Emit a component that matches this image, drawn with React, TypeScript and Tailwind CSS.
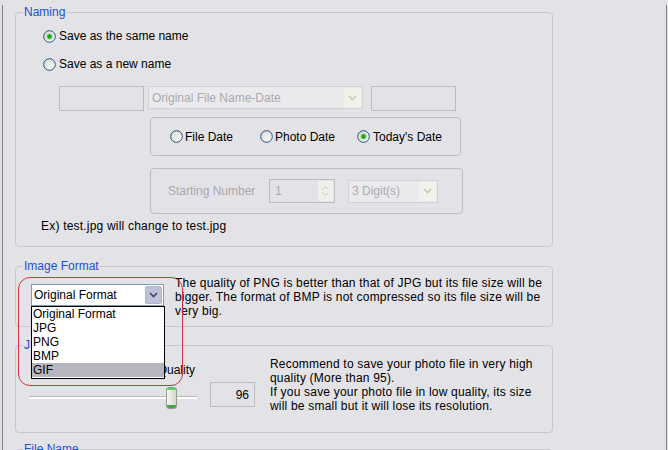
import React from "react";

const FONT = { fontFamily: '"Liberation Sans", Arial, sans-serif' };

function Radio({ checked }: { checked?: boolean }) {
    return (
        <svg width="13" height="13" viewBox="0 0 13 13" className="shrink-0">
            <defs>
                <linearGradient id="radioFill" x1="0" y1="0" x2="1" y2="1">
                    <stop offset="0" stopColor="#d6d6ce" />
                    <stop offset="1" stopColor="#ffffff" />
                </linearGradient>
            </defs>
            <circle cx="6.5" cy="6.5" r="5.8" fill="url(#radioFill)" stroke="#1d5281" strokeWidth="1" />
            {checked && (
                <>
                    <circle cx="6.5" cy="6.5" r="3.2" fill="#a6dc9c" />
                    <circle cx="6.5" cy="6.5" r="2.2" fill="#21a121" />
                </>
            )}
        </svg>
    );
}

function Chevron({ color }: { color: string }) {
    return (
        <svg width="9" height="6" viewBox="0 0 9 6">
            <path d="M1 1 L4.5 4.5 L8 1" fill="none" stroke={color} strokeWidth="1.6" />
        </svg>
    );
}

// greyed out combo box
function DisabledSelect({ text, className }: { text: string; className: string }) {
    return (
        <div
            className={
                "h-[23px] flex items-center border border-[#d2d2d6] bg-[#eaeaec] pl-[3px] pr-[1px] " +
                className
            }
        >
            <span className="flex-1 text-[#ababaf] whitespace-nowrap overflow-hidden">{text}</span>
            <div className="w-[17px] h-[19px] flex items-center justify-center bg-[#f2f2ea]">
                <Chevron color="#c8c8c4" />
            </div>
        </div>
    );
}

function Group({
    title,
    className,
    children,
}: {
    title: string;
    className: string;
    children?: React.ReactNode;
}) {
    return (
        <fieldset className={"w-[538px] rounded-[4px] border border-[#c7c7cd] " + className}>
            <legend className="ml-[7px] px-[1px] leading-[14px] text-[#1d4fd2]">{title}</legend>
            {children}
        </fieldset>
    );
}

export default function App() {
    return (
        <div
            className="relative w-[668px] h-[450px] overflow-hidden bg-[#e3e3e7] text-[12px] leading-[14px] text-black"
            style={FONT}
        >
            <div className="ml-[2px] w-[665px] h-full border-l border-r border-[#80808e] pl-[12px]">
                {/* Naming */}
                <Group title="Naming" className="mt-[5px] pb-[12px]">
                    <div className="mt-[9px] ml-[27px] h-[16px] flex items-center gap-[3px]">
                        <Radio checked />
                        <span>Save as the same name</span>
                    </div>
                    <div className="mt-[12px] ml-[27px] h-[16px] flex items-center gap-[3px]">
                        <Radio />
                        <span>Save as a new name</span>
                    </div>

                    <div className="mt-[14px] ml-[43px] flex items-start">
                        <div className="w-[85px] h-[25px] border border-[#bcbcc2]" />
                        <DisabledSelect className="ml-[4px] w-[215px]" text="Original File Name-Date" />
                        <div className="ml-[8px] w-[85px] h-[25px] border border-[#bcbcc2]" />
                    </div>

                    <div className="mt-[6px] ml-[134px] w-[311px] h-[39px] rounded-[4px] border border-[#bcbcc2] flex items-center pl-[19px]">
                        <div className="w-[90px] flex items-center gap-[2px]">
                            <Radio />
                            <span>File Date</span>
                        </div>
                        <div className="w-[97px] flex items-center gap-[2px]">
                            <Radio />
                            <span>Photo Date</span>
                        </div>
                        <div className="flex items-center gap-[3px]">
                            <Radio checked />
                            <span>Today's Date</span>
                        </div>
                    </div>

                    <div className="mt-[12px] ml-[134px] w-[313px] h-[46px] rounded-[4px] border border-[#bcbcc2] flex items-center pl-[17px]">
                        <span className="w-[101px] text-[#a9a9ad]">Starting Number</span>
                        <div className="w-[66px] h-[24px] flex items-center border border-[#bcbcc2] pl-[5px] pr-[1px]">
                            <span className="flex-1 text-[#a9a9ad]">1</span>
                            <div className="w-[15px] h-[20px] flex flex-col items-center justify-center gap-[2px] bg-[#f0f0e8]">
                                <svg width="7" height="4" viewBox="0 0 7 4">
                                    <path d="M0.5 3.5 L3.5 0.5 L6.5 3.5" fill="none" stroke="#c4c4c0" />
                                </svg>
                                <svg width="7" height="4" viewBox="0 0 7 4">
                                    <path d="M0.5 0.5 L3.5 3.5 L6.5 0.5" fill="none" stroke="#c4c4c0" />
                                </svg>
                            </div>
                        </div>
                        <DisabledSelect className="ml-[13px] w-[90px]" text="3 Digit(s)" />
                    </div>

                    <div className="mt-[4px] ml-[25px] h-[16px] flex items-center tracking-[0.2px]">
                        Ex) test.jpg will change to test.jpg
                    </div>
                </Group>

                {/* Image Format */}
                <Group title="Image Format" className="mt-[12px] pb-[8px]">
                    <div className="mt-[3px] flex items-start">
                        <div className="mt-[8px] ml-[15px] w-[133px] h-[22px] flex items-center border border-[#7f9db9] bg-white pl-[2px] pr-[1px]">
                            <span className="flex-1 whitespace-nowrap">Original Format</span>
                            <div className="w-[17px] h-[18px] flex items-center justify-center rounded-[2px] bg-[#bcc3d6] border border-[#a9b3cc]">
                                <Chevron color="#3c4866" />
                            </div>
                        </div>
                        <div className="ml-[11px] whitespace-nowrap tracking-[0.2px]">
                            <div>The quality of PNG is better than that of JPG but its file size will be</div>
                            <div>bigger. The format of BMP is not compressed so its file size will be</div>
                            <div>very big.</div>
                        </div>
                    </div>
                </Group>

                {/* JPG Quality */}
                <Group title="JPG Quality" className="mt-[11px] pb-[19px]">
                    <div className="mt-[5px] flex items-start">
                        <div className="ml-[13px] w-[168px]">
                            <div className="mt-[6px] h-[14px] flex justify-between px-[2px] whitespace-nowrap">
                                <span>Low Quality</span>
                                <span>High Quality</span>
                            </div>
                            <div className="relative mt-[10px] h-[22px]">
                                <div className="absolute left-0 right-0 top-[9px] h-[3px] border-t border-[#b8b8bc] bg-white" />
                                <div className="absolute left-[137px] top-0 w-[11px] h-[22px] rounded-[3px] border border-[#8fa08f] bg-gradient-to-r from-[#f6f6f4] to-[#d6d6d0] overflow-hidden flex flex-col justify-between">
                                    <div className="h-[2px] bg-[#6ac46a]" />
                                    <div className="h-[3px] bg-[#3fa83f]" />
                                </div>
                            </div>
                        </div>
                        <div className="mt-[25px] ml-[13px] w-[45px] h-[25px] border border-[#bcbcc2] flex items-center justify-end pr-[5px]">
                            96
                        </div>
                        <div className="ml-[15px] whitespace-nowrap tracking-[0.2px]">
                            <div>Recommend to save your photo file in very high</div>
                            <div>quality (More than 95).</div>
                            <div>If you save your photo file in low quality, its size</div>
                            <div>will be small but it will lose its resolution.</div>
                        </div>
                    </div>
                </Group>

                <Group title="File Name" className="mt-[9px] h-[40px]" />
            </div>

            {/* open drop-down list */}
            <div className="absolute left-[31px] top-[306px] w-[134px] h-[73px] border border-black bg-white">
                <div className="pl-[1px] h-[14px]">Original Format</div>
                <div className="pl-[1px] h-[14px]">JPG</div>
                <div className="pl-[1px] h-[14px]">PNG</div>
                <div className="pl-[1px] h-[14px]">BMP</div>
                <div className="pl-[1px] h-[14px] bg-[#b6b6be]">GIF</div>
            </div>

            {/* red annotation */}
            <div className="absolute left-[18px] top-[277px] w-[165px] h-[109px] rounded-[12px] border border-[#d8303c]" />
        </div>
    );
}
